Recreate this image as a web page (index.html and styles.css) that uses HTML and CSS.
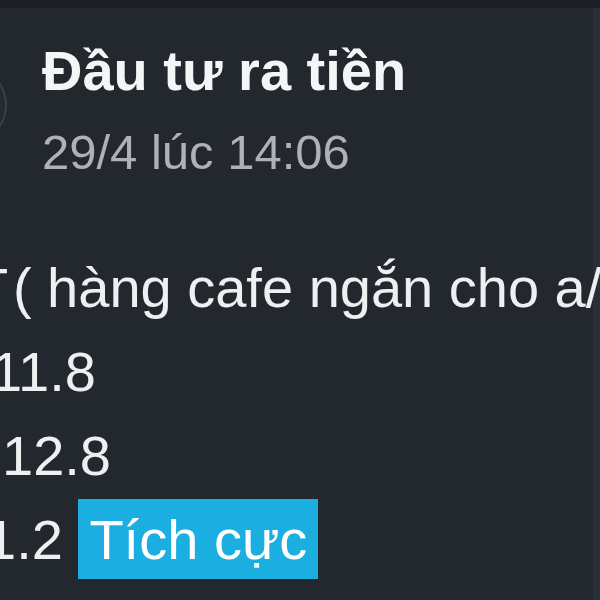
FILE: index.html
```html
<!DOCTYPE html>
<html lang="vi">
<head>
<meta charset="utf-8">
<title>Đầu tư ra tiền</title>
<link rel="stylesheet" href="styles.css">
</head>
<body>
<div class="topband"></div>
<main class="post">
  <header class="head">
    <div class="avatar"></div>
    <div class="meta">
      <div class="title">Đầu tư ra tiền</div>
      <div class="date">29/4 lúc 14:06</div>
    </div>
  </header>
  <section class="content">
    <div class="line l1">T&#8202;( hàng cafe ngắn cho a/c trong nhóm</div>
    <div class="line l2">11.8</div>
    <div class="line l3">12.8</div>
    <div class="line l4">1.2 <span class="tag">Tích cực</span></div>
  </section>
</main>
</body>
</html>
```
FILE: styles.css
```css
html, body {
  margin: 0;
  padding: 0;
}
body {
  width: 600px;
  height: 600px;
  overflow: hidden;
  background: linear-gradient(to left, #2a2e35 7px, #23272e 7px);
  font-family: "Liberation Sans", Arial, sans-serif;
  color: #eeeff1;
}
.topband {
  height: 8px;
  background: #1c1f25;
}
.post {
  overflow: hidden;
}
.head {
  display: flex;
  align-items: center;
  padding-top: 31px;
}
.avatar {
  flex: none;
  width: 80px;
  height: 80px;
  margin-left: -73px;
  margin-right: 35px;
  margin-bottom: 14px;
  border-radius: 50%;
  box-sizing: border-box;
  border: 2px solid #3a4149;
  background: #262a31;
}
.meta {
  display: flex;
  flex-direction: column;
  gap: 17px;
}
.title {
  font-size: 56px;
  line-height: 64px;
  font-weight: bold;
  color: #f4f5f6;
  white-space: nowrap;
}
.date {
  font-size: 49px;
  line-height: 64px;
  color: #aeb1b7;
  white-space: nowrap;
}
.content {
  margin-top: 62px;
}
.line {
  font-size: 56px;
  line-height: 84px;
  white-space: nowrap;
}
.l1 { margin-left: -26px; }
.l2 { margin-left: -9px; }
.l3 { margin-left: 2px; }
.l4 { margin-left: -15px; }
.tag {
  display: inline-block;
  line-height: 62px;
  padding: 10px 11px 8px 11px;
  background: #1aafe0;
  color: #ffffff;
}
```
